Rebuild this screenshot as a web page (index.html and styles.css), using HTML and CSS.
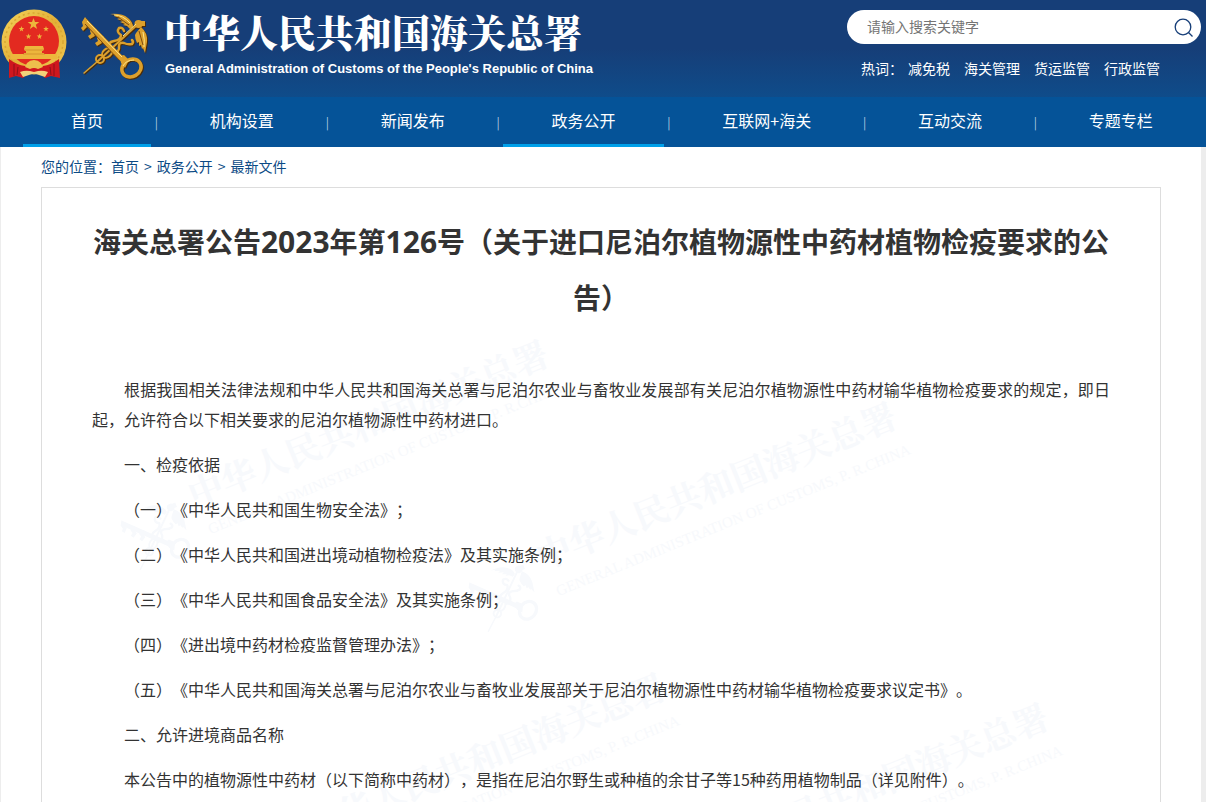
FILE: index.html
```
<!DOCTYPE html>
<html lang="zh-CN">
<head>
<meta charset="utf-8">
<title>海关总署公告2023年第126号</title>
<link rel="stylesheet" href="styles.css">
</head>
<body>
<header class="header">
  <a class="brand" href="#">
    <svg class="emblem" viewBox="0 0 66 70" aria-hidden="true">
      <defs>
        <linearGradient id="gold" x1="0" y1="0" x2="1" y2="1">
          <stop offset="0" stop-color="#f3d45c"/><stop offset=".5" stop-color="#e3b038"/><stop offset="1" stop-color="#f0c850"/>
        </linearGradient>
        <path id="star" d="M0-6 1.5-1.9 5.8-1.9 2.3.8 3.6 5 0 2.4-3.6 5-2.3.8-5.8-1.9-1.5-1.9Z"/>
      </defs>
      <circle cx="33" cy="33" r="32.5" fill="url(#gold)"/>
      <circle cx="33" cy="33" r="29" fill="none" stroke="#d9a632" stroke-width="1.5" stroke-dasharray="2 3"/>
      <circle cx="33" cy="32" r="25" fill="#e32a20"/>
      <g fill="#edb63c">
        <use href="#star" transform="translate(32.500 15)"/>
        <use href="#star" transform="translate(20.500 20) scale(.48)"/>
        <use href="#star" transform="translate(45 20) scale(.48)"/>
        <use href="#star" transform="translate(27.500 27.500) scale(.48)"/>
        <use href="#star" transform="translate(38.500 27.500) scale(.48)"/>
        <path d="M24 37h18l1 3-1 2h-1v2h2v1h13v5H10v-5h13v-1h2v-2h-1l-1-2Z"/>
      </g>
      <path d="M24 41h18M22 45h22" stroke="#c77f22" stroke-width=".6"/>
      <path d="M8 50q8 6 16 7h18q8-1 16-7l1 19-9-2-6 2-5-5H27l-5 5-7-2-7 2Z" fill="#cf171e"/>
      <path d="M13 55v12M17 58l-1 8M53 55v12M49 58l1 8" stroke="#8f1118" stroke-width="1"/>
      <path d="M26 54q3-3 7-3t7 3l2 4-5 2q-4-2-8 0l-5-2Z" fill="#edc04c"/>
      <path d="M29 62q-5-1-10 1l3 5 9-3q2-1 4 0l9 3 3-5q-5-2-10-1l-4 1Z" fill="#f2d27a"/>
    </svg>
    <svg class="keys" viewBox="0 0 68 68" aria-hidden="true">
      <defs>
        <symbol id="customs" viewBox="0 0 68 68" overflow="visible">
          <g fill="none" stroke="currentColor" stroke-linecap="round" stroke-linejoin="round">
            <path d="M3 60 17 48" stroke-width="1.5"/>
            <path d="M17 48 57 11" stroke-width="2"/>
            <circle cx="19" cy="46" r="4" stroke-width="2"/>
            <ellipse cx="26" cy="40" rx="5.500" ry="4" transform="rotate(-42 26 40)" stroke-width="2"/>
            <path d="M29 36q-3-7 4-8t7-6q-5-3-2-7 4-1 5 3M31 40q8 0 7-7 0-4 5-3 4 2 8 1 2-2 0-4" stroke-width="2.500"/>
            <path d="M4 8 42 47" stroke-width="5" stroke-linecap="butt"/>
            <ellipse cx="50.500" cy="55" rx="10" ry="8.500" transform="rotate(-30 50.500 55)" stroke-width="3.500"/>
          </g>
          <g fill="currentColor">
            <path d="M4 4 8 9 5 12 6 14 2 18 0 15 2 13 1 9ZM11 13l5 4-3 4 1 2-5 3-2-3 3-2-1-3ZM18 20l5 4-3 4 1 2-5 3-2-3 3-2-1-3Z"/>
            <path d="M29 1q12-1 18 4 5 4 5 9l-3 2-3-3-4-1 2-1-5-2 3-1-6-2 3-1-6-2 2-1Z"/>
            <path d="M60 14q7 6 6 15l-2 11-2-5-1 1-1-4-2 1v-4l-2 1q-2-4-2-8l1-2Z"/>
            <circle cx="57.500" cy="11" r="4"/><path d="M59 8h5v5h-4Z"/>
            <path d="M39 43 43 42 48 47 44 55 40 50Z"/>
          </g>
        </symbol>
      </defs>
      <use href="#customs" class="keys-shade" width="68" height="68" x="1" y="1"/>
      <use href="#customs" class="keys-gold" width="68" height="68"/>
      <path d="M6 8 41 44M42 53q3-6 11-6M55 11 42 23M33 2q9 0 16 8M62 19q2 8 1 15" fill="none" stroke="#ffe58a" stroke-width="1"/>
      <path d="M4 11 38 47M37 4l11 8M58 18l4 14" fill="none" stroke="#7c4a10" stroke-width="1"/>
    </svg>
    <span class="brand-text">
      <span class="brand-cn">中华人民共和国海关总署</span>
      <span class="brand-en">General Administration of Customs of the People's Republic of China</span>
    </span>
  </a>
  <div class="tools">
    <form class="search" role="search">
      <input class="search-input" type="search" placeholder="请输入搜索关键字" aria-label="请输入搜索关键字">
      <button class="search-button" type="button" aria-label="搜索">
        <svg viewBox="0 0 20 20" width="20" height="20" aria-hidden="true"><circle cx="9" cy="9" r="7.800"/><path d="m14.500 14.500 4 4"/></svg>
      </button>
    </form>
    <div class="hot">
      <span class="hot-label">热词：</span>
      <a href="#">减免税</a><a href="#">海关管理</a><a href="#">货运监管</a><a href="#">行政监管</a>
    </div>
  </div>
</header>
<nav class="nav" aria-label="主导航">
  <a class="nav-link active" href="#">首页</a><span class="nav-sep">|</span>
  <a class="nav-link" href="#">机构设置</a><span class="nav-sep">|</span>
  <a class="nav-link" href="#">新闻发布</a><span class="nav-sep">|</span>
  <a class="nav-link active" href="#">政务公开</a><span class="nav-sep">|</span>
  <a class="nav-link" href="#">互联网+海关</a><span class="nav-sep">|</span>
  <a class="nav-link" href="#">互动交流</a><span class="nav-sep">|</span>
  <a class="nav-link" href="#">专题专栏</a>
</nav>
<main class="page">
  <svg class="watermark" aria-hidden="true">
    <defs>
      <g id="mark">
        <use href="#customs" x="-28" y="-36" width="64" height="64"/>
        <text class="mark-cn" x="48" y="-16">中华人民共和国海关总署</text>
        <text class="mark-en" x="53" y="14">GENERAL ADMINISTRATION OF CUSTOMS, P. R.CHINA</text>
      </g>
    </defs>
    <use href="#mark" transform="translate(155 394) rotate(-22)"/>
    <use href="#mark" transform="translate(503 456) rotate(-22)"/>
    <use href="#mark" transform="translate(272 727) rotate(-22)"/>
    <use href="#mark" transform="translate(655 757) rotate(-22)"/>
  </svg>
  <div class="crumbs">
    <span>您的位置：</span><a href="#">首页</a><span class="crumb-sep">&gt;</span><a href="#">政务公开</a><span class="crumb-sep">&gt;</span><a href="#">最新文件</a>
  </div>
  <article class="article">
    <h1 class="title">海关总署公告<span class="num">2023</span>年第<span class="num">126</span>号（关于进口尼泊尔植物源性中药材植物检疫要求的公告）</h1>
    <div class="body">
      <p>根据我国相关法律法规和中华人民共和国海关总署与尼泊尔农业与畜牧业发展部有关尼泊尔植物源性中药材输华植物检疫要求的规定，即日起，允许符合以下相关要求的尼泊尔植物源性中药材进口。</p>
      <p>一、检疫依据</p>
      <p>（一）《中华人民共和国生物安全法》；</p>
      <p>（二）《中华人民共和国进出境动植物检疫法》及其实施条例；</p>
      <p>（三）《中华人民共和国食品安全法》及其实施条例；</p>
      <p>（四）《进出境中药材检疫监督管理办法》；</p>
      <p>（五）《中华人民共和国海关总署与尼泊尔农业与畜牧业发展部关于尼泊尔植物源性中药材输华植物检疫要求议定书》。</p>
      <p>二、允许进境商品名称</p>
      <p>本公告中的植物源性中药材（以下简称中药材），是指在尼泊尔野生或种植的余甘子等15种药用植物制品（详见附件）。</p>
    </div>
  </article>
</main>
</body>
</html>
```
FILE: styles.css
```
* { box-sizing: border-box; }

body {
  display: flex;
  flex-direction: column;
  min-height: 100vh;
  margin: 0;
  background: #ededed;
  color: #333;
  font-family: "Noto Sans CJK SC", sans-serif;
  font-size: 14px;
  line-height: 20px;
  text-spacing-trim: space-all;
}

a { color: inherit; text-decoration: none; }

.header {
  display: flex;
  justify-content: space-between;
  height: 97px;
  padding: 9px 5px 0 1px;
  background: linear-gradient(#163e78 50%, #0f4c8a);
  color: #fff;
}

.brand { display: flex; align-items: flex-start; }
.emblem { width: 66px; height: 70px; }
.keys { width: 68px; height: 68px; margin: 4px 0 0 14px; }
.keys-shade { color: #4b2c08; }
.keys-gold { color: #dca02c; }

.brand-text { display: flex; flex-direction: column; margin-left: 15px; white-space: nowrap; }
.brand-cn {
  font: 900 38px/44px "Noto Serif CJK SC", "Noto Sans CJK SC", serif;
}
.brand-en { padding: 6px 0 0 1px; font: 700 13px/20px "Liberation Sans", Arial, sans-serif; }

.tools { width: 354px; padding-top: 1px; }
.search {
  display: flex;
  align-items: center;
  height: 34px;
  padding: 0 7px 0 20px;
  border-radius: 17px;
  background: #fff;
}
.search-input {
  flex: 1;
  min-width: 0;
  padding: 0 0 2px;
  border: 0;
  outline: 0;
  background: none;
  font: inherit;
}
.search-input::placeholder { color: #757575; }
.search-button {
  display: flex;
  padding: 2px 0 0;
  border: 0;
  background: none;
}
.search-button svg { fill: none; stroke: #163e78; stroke-width: 1.3; }

.hot { display: flex; gap: 14px; padding: 14px 0 0 14px; }
.hot-label { margin-right: -9px; }

.nav {
  display: flex;
  justify-content: space-between;
  height: 50px;
  padding: 0 5px 0 23px;
  background: #055398;
  color: #fff;
}
.nav-link {
  padding: 0 48px;
  border-bottom: 3px solid transparent;
  font-size: 16px;
  line-height: 46px;
  white-space: nowrap;
}
.nav-link.active { border-color: #00a0e9; }
.nav-sep { color: #b4cbe0; font-size: 12px; line-height: 50px; }

.page {
  position: relative;
  flex: 1;
  display: flex;
  flex-direction: column;
  margin: 0 5px 0 1px;
  padding: 0 40px;
  background: #fff;
}
.watermark {
  position: absolute;
  inset: 0;
  width: 100%;
  height: 100%;
  overflow: hidden;
  color: #f7f9fc;
  fill: currentColor;
}
.mark-cn { font: 700 35px "Noto Serif CJK SC", "Noto Sans CJK SC", serif; }
.mark-en { font: 15px "Liberation Serif", serif; }

.crumbs {
  position: relative;
  display: flex;
  height: 40px;
  align-items: center;
  padding-bottom: 2px;
  color: #0b4a85;
}
.crumb-sep { margin: 0 5px; }

.article {
  position: relative;
  flex: 1;
  padding: 25px 50px 0;
  border: 1px solid #ddd;
  border-bottom: 0;
}
.title {
  margin: 0 0 49px;
  font-size: 28px;
  line-height: 56px;
  text-align: center;
}
.num { font-family: "Noto Sans", sans-serif; font-size: 30px; line-height: 1; }

.body {
  display: flex;
  flex-direction: column;
  gap: 15px;
  font-size: 16px;
  line-height: 30px;
  text-align: justify;
  text-indent: 2em;
}
.body p { margin: 0; }
```
